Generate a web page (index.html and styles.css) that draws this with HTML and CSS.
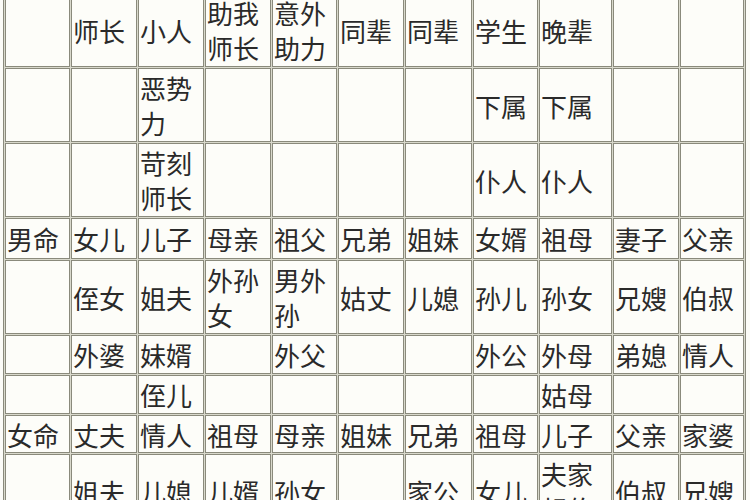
FILE: index.html
```html
<!DOCTYPE html>
<html lang="zh-CN">
<head>
<meta charset="utf-8">
<title>命宫关系表</title>
<link rel="stylesheet" href="styles.css">
</head>
<body>
<table class="grid">
  <colgroup>
    <col class="c0"><col class="c1"><col class="c2"><col class="c3"><col class="c4"><col class="c5"><col class="c6"><col class="c7"><col class="c8"><col class="c9"><col class="c10">
  </colgroup>
  <tbody>
    <tr class="r0"><td></td><td>师长</td><td>小人</td><td>助我师长</td><td>意外助力</td><td>同辈</td><td>同辈</td><td>学生</td><td>晚辈</td><td></td><td></td></tr>
    <tr class="r1"><td></td><td></td><td>恶势力</td><td></td><td></td><td></td><td></td><td>下属</td><td>下属</td><td></td><td></td></tr>
    <tr class="r2"><td></td><td></td><td>苛刻师长</td><td></td><td></td><td></td><td></td><td>仆人</td><td>仆人</td><td></td><td></td></tr>
    <tr class="r3"><td>男命</td><td>女儿</td><td>儿子</td><td>母亲</td><td>祖父</td><td>兄弟</td><td>姐妹</td><td>女婿</td><td>祖母</td><td>妻子</td><td>父亲</td></tr>
    <tr class="r4"><td></td><td>侄女</td><td>姐夫</td><td>外孙女</td><td>男外孙</td><td>姑丈</td><td>儿媳</td><td>孙儿</td><td>孙女</td><td>兄嫂</td><td>伯叔</td></tr>
    <tr class="r5"><td></td><td>外婆</td><td>妹婿</td><td></td><td>外父</td><td></td><td></td><td>外公</td><td>外母</td><td>弟媳</td><td>情人</td></tr>
    <tr class="r6"><td></td><td></td><td>侄儿</td><td></td><td></td><td></td><td></td><td></td><td>姑母</td><td></td><td></td></tr>
    <tr class="r7"><td>女命</td><td>丈夫</td><td>情人</td><td>祖母</td><td>母亲</td><td>姐妹</td><td>兄弟</td><td>祖母</td><td>儿子</td><td>父亲</td><td>家婆</td></tr>
    <tr class="r8"><td></td><td>姐夫</td><td>儿媳</td><td>儿婿</td><td>孙女</td><td></td><td>家公</td><td>女儿</td><td>夫家叔伯</td><td>伯叔</td><td>兄嫂</td></tr>
  </tbody>
</table>
</body>
</html>
```

FILE: styles.css
```css
html, body {
  margin: 0;
  padding: 0;
  background: #fcfcf8;
  overflow: hidden;
}

.grid {
  margin: -9px 0 0 3px;
  table-layout: fixed;
  width: 743px;
  border-collapse: separate;
  border-spacing: 1px;
  border: 1px solid #8a8a7c;
  background: #d9d9cc;
  font-family: "Noto Sans CJK SC", "Noto Sans CJK JP", sans-serif;
  font-size: 26px;
  line-height: 35px;
  color: #2a2a2a;
}

.c0 { width: 65px; }
.c1 { width: 66px; }
.c2 { width: 66px; }
.c3 { width: 66px; }
.c4 { width: 65px; }
.c5 { width: 66px; }
.c6 { width: 67px; }
.c7 { width: 65px; }
.c8 { width: 73px; }
.c9 { width: 66px; }
.c10 { width: 64px; }

.grid td {
  box-sizing: border-box;
  border: 1px solid #8a8a7c;
  background: #fdfdf9;
  padding: 0 0 0 1px;
  vertical-align: middle;
  text-align: left;
  overflow: hidden;
  word-break: break-all;
}

.r0 td, .r1 td, .r2 td, .r4 td, .r8 td { height: 74px; }
.r3 td { height: 41px; }
.r5 td, .r6 td { height: 39px; }
.r7 td { height: 38px; }
```
